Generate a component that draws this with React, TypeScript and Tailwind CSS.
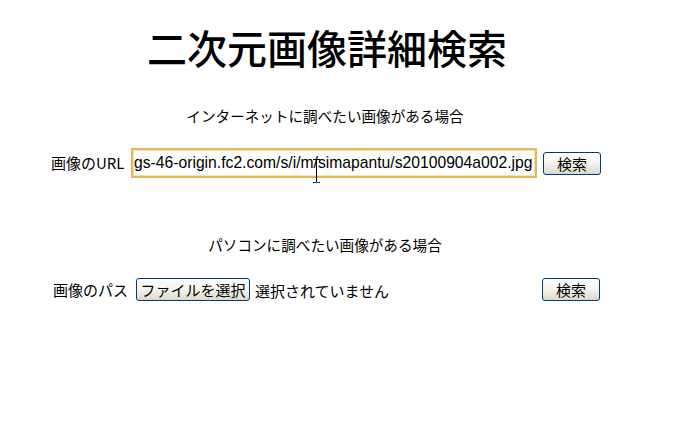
const jp = "font-['MS_PGothic','Noto_Sans_CJK_JP',sans-serif]";

function SearchButton() {
  return (
    <button
      type="button"
      className="flex h-[23px] w-[58px] items-center justify-center rounded-[3px] border border-[#003c74] bg-gradient-to-b from-white via-[#f4f3ee] to-[#dcd9cc] text-[15px] leading-none text-black"
    >
      検索
    </button>
  );
}

export default function App() {
  return (
    <div className={`relative min-h-[429px] w-[685px] bg-white text-black ${jp}`}>
      <div className="w-[650px]">
        <h1 className="pt-[21px] pl-[4px] text-center text-[40px] leading-[52px] font-medium">
          二次元画像詳細検索
        </h1>

        <p className="mt-[33px] text-center text-[14.6px] leading-[20px]">
          インターネットに調べたい画像がある場合
        </p>

        <div className="mt-[22px] flex items-center pl-[51px]">
          <span className="w-[80px] text-[15px] leading-[20px]">画像のURL</span>
          <input
            readOnly
            value="gs-46-origin.fc2.com/s/i/m/simapantu/s20100904a002.jpg"
            className="h-[30px] w-[406px] border-2 border-[#e2b858] bg-white px-[1px] font-['Liberation_Sans',sans-serif] text-[15.7px] text-black shadow-[inset_0_0_0_1px_#f6e3b4] outline-none"
          />
          <div className="ml-[6px]">
            <SearchButton />
          </div>
        </div>

        <p className="mt-[57px] text-center text-[14.6px] leading-[20px]">
          パソコンに調べたい画像がある場合
        </p>

        <div className="mt-[23px] flex items-center pl-[53px] pr-[50px]">
          <span className="w-[83px] text-[15px] leading-[20px]">画像のパス</span>
          <button
            type="button"
            className="flex h-[23px] w-[114px] items-center justify-center rounded-[3px] border border-[#003c74] bg-gradient-to-b from-white via-[#f4f3ee] to-[#dcd9cc] text-[15px] leading-none text-black"
          >
            ファイルを選択
          </button>
          <span className="ml-[5px] mt-[3px] text-[15px] leading-[20px]">選択されていません</span>
          <div className="ml-auto">
            <SearchButton />
          </div>
        </div>
      </div>

      {/* mouse I-beam over the url field */}
      <svg
        className="absolute left-[313px] top-[159px]"
        width="7"
        height="24"
        viewBox="0 0 7 24"
        fill="none"
      >
        <path d="M0 0.5h7M3.5 0.5v23M0 23.5h7" stroke="#000" strokeWidth="1" />
        <path d="M1 23.5h5" stroke="#3050a0" strokeWidth="1" />
      </svg>
    </div>
  );
}
